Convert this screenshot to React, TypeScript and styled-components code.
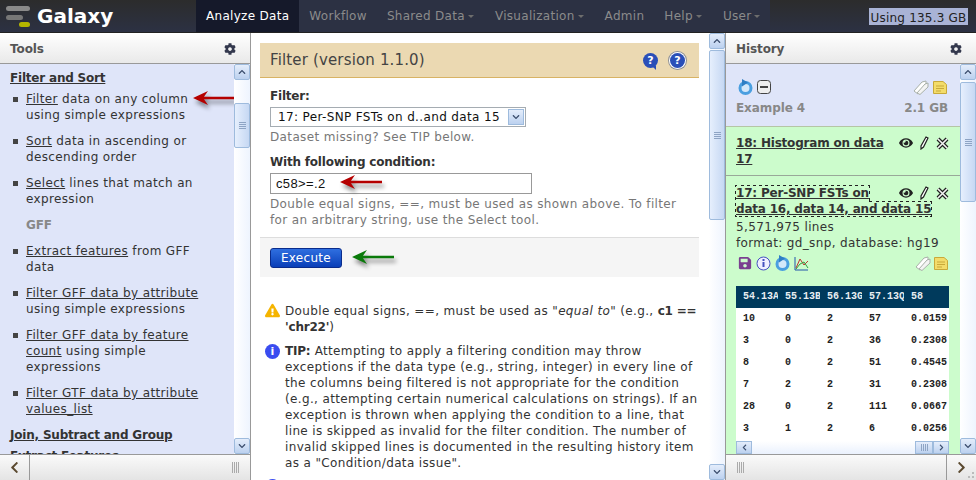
// App.tsx
import React from "react";
import styled, { createGlobalStyle } from "styled-components";
import { FaCog, FaEye, FaChevronLeft, FaChevronRight, FaChevronUp, FaChevronDown, FaSave, FaExclamationTriangle } from "react-icons/fa";

const GlobalStyle = createGlobalStyle`
  html, body { margin: 0; padding: 0; height: 100%; overflow: hidden; }
  body { font-family: "DejaVu Sans", Verdana, sans-serif; font-size: 12px; letter-spacing: 0.36px; color: #333; background: #fff; }
  b { letter-spacing: -0.2px; }
  #root { height: 480px; }
`;

const Page = styled.div`
  width: 976px;
  height: 480px;
  display: flex;
  flex-direction: column;
  overflow: hidden;
`;

const Masthead = styled.header`
  height: 33px;
  display: flex;
  background: linear-gradient(#2c2c2c, #2c3143);
  border-bottom: 1px solid #222;
  box-sizing: border-box;
  flex: none;
`;

const Brand = styled.div`
  width: 196px;
  display: flex;
  align-items: center;
  padding-left: 6px;
  gap: 7px;
  box-sizing: border-box;
`;

const BrandName = styled.span`
  color: #fff;
  font-weight: bold;
  font-size: 20px;
  letter-spacing: 0;
`;

const Nav = styled.nav`
  width: 574px;
  display: flex;
  background: #2c3143;
`;

const NavItem = styled.a<{ $active?: boolean }>`
  display: flex;
  align-items: center;
  padding: 0 10px;
  height: 32px;
  color: ${(p) => (p.$active ? "#fff" : "#8b8b8b")};
  background: ${(p) => (p.$active ? "#15192a" : "transparent")};
  font-size: 12px;
  letter-spacing: 0.3px;
  white-space: nowrap;
`;

const Caret = styled.i`
  display: inline-block;
  margin-left: 3px;
  margin-right: 1px;
  width: 0;
  height: 0;
  border-left: 3.5px solid transparent;
  border-right: 3.5px solid transparent;
  border-top: 3.5px solid #6d6d6d;
`;

const Quota = styled.div`
  margin-left: auto;
  margin-right: 8px;
  align-self: flex-start;
  margin-top: 8px;
  height: 17px;
  width: 99px;
  background: #a9b3d6;
  color: #222;
  font-size: 12px;
  letter-spacing: 0.2px;
  line-height: 20px;
  text-align: center;
  white-space: nowrap;
`;

const Main = styled.main`
  flex: 1;
  min-height: 0;
  display: flex;
`;

const SidePanel = styled.aside<{ $side: "left" | "right" }>`
  width: 251px;
  flex: none;
  display: flex;
  flex-direction: column;
  box-sizing: border-box;
  ${(p) => (p.$side === "left" ? "border-right: 1px solid #999;" : "border-left: 1px solid #999;")}
`;

const PanelHeader = styled.div`
  height: 31px;
  flex: none;
  box-sizing: border-box;
  display: flex;
  align-items: center;
  justify-content: space-between;
  padding: 2px 14px 0 10px;
  background: linear-gradient(#fff, #e9e9e9);
  border-bottom: 1px solid #999;
  font-weight: bold;
  font-size: 12px;
  letter-spacing: -0.1px;
  color: #555;
  svg { color: #33384d; width: 12px; height: 12px; }
`;

const PanelBody = styled.div`
  flex: 1;
  min-height: 0;
  display: flex;
  background: #dfe5f9;
`;

const PanelFooter = styled.div`
  height: 26px;
  flex: none;
  display: flex;
  align-items: stretch;
  box-sizing: border-box;
  background: linear-gradient(#fafafa, #e4e4e4);
  border-top: 1px solid #999;
`;

const FooterToggle = styled.div<{ $end?: boolean }>`
  width: 30px;
  display: flex;
  align-items: center;
  justify-content: center;
  box-sizing: border-box;
  color: #5b4a30;
  ${(p) => (p.$end ? "border-left: 1px solid #999;" : "border-right: 1px solid #999;")}
  ${(p) =>
    p.$end
      ? `background: radial-gradient(circle, #bbb 1px, transparent 1.2px) right 1px bottom 1px / 4px 4px no-repeat,
         radial-gradient(circle, #bbb 1px, transparent 1.2px) right 5px bottom 1px / 4px 4px no-repeat,
         radial-gradient(circle, #bbb 1px, transparent 1.2px) right 1px bottom 5px / 4px 4px no-repeat;`
      : ""}
  svg { width: 11px; height: 13px; }
`;

const Grip = styled.div`
  width: 7px;
  height: 11px;
  margin: 7px 0 0 0;
  background: repeating-linear-gradient(90deg, #aaa 0 1px, transparent 1px 2px);
`;

const FooterFill = styled.div<{ $end?: boolean }>`
  flex: 1;
  display: flex;
  justify-content: ${(p) => (p.$end ? "flex-end" : "flex-start")};
  padding: 0 ${(p) => (p.$end ? "11px" : "0")} 0 ${(p) => (p.$end ? "0" : "11px")};
`;

/* luna style scrollbars */
const ScrollV = styled.div`
  width: 16px;
  flex: none;
  display: flex;
  flex-direction: column;
  background: linear-gradient(90deg, #fff, #eef4fe);
  box-sizing: border-box;
`;

const ScrollBtn = styled.div`
  flex: none;
  width: 16px;
  height: 16px;
  box-sizing: border-box;
  border: 1px solid #9ebbdd;
  border-radius: 2px;
  background: linear-gradient(#e4edfb, #bcd1ef);
  display: flex;
  align-items: center;
  justify-content: center;
  color: #3c4e6e;
  svg { width: 8px; height: 8px; }
`;

const ScrollThumb = styled.div<{ $top: number; $h: number }>`
  margin-top: ${(p) => p.$top}px;
  height: ${(p) => p.$h}px;
  box-sizing: border-box;
  border: 1px solid #9ebbdd;
  border-radius: 2px;
  background: linear-gradient(90deg, #e6effd, #c6d8f3);
  display: flex;
  align-items: center;
  justify-content: center;
  flex: none;
`;

const ThumbLines = styled.div<{ $across?: boolean }>`
  width: 7px;
  height: 7px;
  background: repeating-linear-gradient(${(p) => (p.$across ? "90deg, " : "")}#8ea4c4 0 1px, transparent 1px 2px);
`;

const ScrollSpacer = styled.div`
  flex: 1;
`;

const ScrollContent = styled.div`
  flex: 1;
  min-width: 0;
  overflow: hidden;
  position: relative;
`;

/* tools */
const ToolsInner = styled.div`
  padding: 6px 0 0 10px;
  line-height: 16px;
  font-size: 12px;
  color: #333;
`;

const SectionTitle = styled.div<{ $gap?: number }>`
  font-weight: bold;
  letter-spacing: -0.2px;
  text-decoration: underline;
  margin: ${(p) => p.$gap ?? 0}px 0 5px;
  white-space: nowrap;
`;

const ToolList = styled.ul`
  list-style: none;
  margin: 0;
  padding: 0;
`;

const ToolItem = styled.li`
  padding-left: 16px;
  margin-bottom: 10px;
  position: relative;
  width: 184px;
  &::before {
    content: "";
    position: absolute;
    left: 3px;
    top: 6px;
    width: 5px;
    height: 5px;
    background: #444;
  }
`;

const ToolLabel = styled.div`
  padding-left: 16px;
  font-weight: bold;
  letter-spacing: -0.2px;
  color: #888;
  margin-bottom: 10px;
`;

const Link = styled.span`
  text-decoration: underline;
`;

/* center */
const Center = styled.section`
  flex: 1;
  min-width: 0;
  display: flex;
`;

const CenterInner = styled.div`
  padding: 10px 10px 0 9px;
`;

const FormCard = styled.div`
  position: relative;
`;

const FormTitle = styled.div`
  height: 35px;
  box-sizing: border-box;
  background: #ebd9b2;
  border-bottom: 1px solid #d8b365;
  display: flex;
  align-items: center;
  justify-content: space-between;
  padding: 0 14px 0 10px;
  font-size: 15px;
  letter-spacing: 0.15px;
  color: #444;
`;

const HelpIcons = styled.div`
  display: flex;
  gap: 12px;
`;

const FormBody = styled.div`
  padding: 10px 10px 0;
`;

const Field = styled.div`
  margin-bottom: 9px;
`;

const FieldLabel = styled.label`
  display: block;
  font-weight: bold;
  letter-spacing: -0.2px;
  line-height: 16px;
  margin-bottom: 3px;
`;

const SelectBox = styled.div`
  width: 256px;
  height: 20px;
  box-sizing: border-box;
  border: 1px solid #a5acb2;
  display: flex;
  align-items: center;
  justify-content: space-between;
  padding: 0 1px 0 7px;
  font-size: 12px;
  color: #111;
  white-space: nowrap;
`;

const SelectArrow = styled.div`
  width: 16px;
  height: 16px;
  box-sizing: border-box;
  border: 1px solid #9ebbdd;
  background: linear-gradient(#e4edfb, #bcd1ef);
  display: flex;
  align-items: center;
  justify-content: center;
  color: #3c4e6e;
  svg { width: 8px; height: 8px; }
`;

const TextInput = styled.div`
  width: 262px;
  height: 21px;
  box-sizing: border-box;
  border: 1px solid #999;
  padding: 0 5px;
  font-family: "Liberation Sans", Arial, sans-serif;
  font-size: 13px;
  line-height: 20px;
  color: #111;
`;

const Help = styled.div`
  color: #777;
  line-height: 16px;
  margin-top: 2px;
  white-space: nowrap;
`;

const ActionBar = styled.div`
  margin-top: 9px;
  height: 40px;
  background: #f5f5f5;
  border-top: 1px solid #ddd;
  box-sizing: border-box;
  padding: 10px 10px 0;
`;

const ExecuteButton = styled.button`
  width: 72px;
  height: 20px;
  border: 1px solid #0a2c8c;
  border-radius: 3px;
  background: linear-gradient(#2f6fe0, #0a3fb8);
  color: #fff;
  font-family: inherit;
  font-size: 12px;
  letter-spacing: 0.3px;
  padding: 0;
`;

const Notes = styled.div`
  margin-top: 26px;
`;

const Note = styled.div`
  display: flex;
  gap: 4px;
  padding-left: 5px;
  margin-bottom: 8px;
  line-height: 16px;
  color: #333;
  white-space: nowrap;
`;

const NoteIconSlot = styled.div`
  width: 16px;
  flex: none;
`;

const ArrowMark = styled.svg<{ $x: number; $y: number }>`
  position: absolute;
  left: ${(p) => p.$x}px;
  top: ${(p) => p.$y}px;
  overflow: visible;
  filter: drop-shadow(2px 4px 2px rgba(0, 0, 0, 0.45));
`;

/* history */
const HistoryScroll = styled.div`
  flex: 1;
  min-width: 0;
  display: flex;
  flex-direction: column;
  overflow: hidden;
`;

const Summary = styled.div`
  height: 63px;
  flex: none;
  box-sizing: border-box;
  padding: 15px 12px 0 10px;
  border-bottom: 1px solid #b5c5a5;
`;

const SummaryRow = styled.div`
  display: flex;
  justify-content: space-between;
  align-items: center;
  height: 16px;
`;

const IconRow = styled.div<{ $gap?: number }>`
  display: flex;
  align-items: center;
  gap: ${(p) => p.$gap ?? 4}px;
  padding: 0 1px 0 2px;
`;

const SummaryName = styled.div`
  display: flex;
  justify-content: space-between;
  font-weight: bold;
  letter-spacing: -0.1px;
  color: #888;
  margin-top: 6px;
`;

const Dataset = styled.div`
  flex: none;
  background: #ccfccc;
  padding: 8px 11px 8px 10px;
  font-size: 12px;
  line-height: 16px;
  color: #333;
  & + & {
    border-top: 1px solid #99a899;
    padding-top: 9px;
  }
`;

const DatasetHead = styled.div`
  &::after { content: ""; display: block; clear: both; }
`;

const DatasetTitle = styled.div<{ $focused?: boolean }>`
  font-weight: bold;
  letter-spacing: -0.2px;
  text-decoration: underline;
  span { ${(p) => (p.$focused ? "outline: 1px dotted #222;" : "")} }
`;

const DatasetActions = styled.div`
  float: right;
  display: flex;
  gap: 7px;
  align-items: center;
  color: #222;
  height: 16px;
  margin: 0 0 0 10px;
`;

const DatasetMeta = styled.div`
  margin-top: 2px;
`;

const DatasetIcons = styled.div`
  display: flex;
  justify-content: space-between;
  align-items: center;
  margin: 3px 0 0 0;
  height: 18px;
`;

const Peek = styled.div`
  margin-top: 14px;
  height: 155px;
  background: #fff;
  overflow: hidden;
  display: grid;
  grid-template-columns: repeat(5, 42px);
  grid-auto-rows: 22px;
  padding-left: 7px;
  font-family: "Liberation Mono", "DejaVu Sans Mono", monospace;
  font-size: 10px;
  letter-spacing: 0;
  font-weight: bold;
  color: #222;
`;

const PeekHead = styled.div`
  background: #003a5c;
  color: #e8eef2;
  line-height: 22px;
  margin-left: -7px;
  padding-left: 7px;
  white-space: nowrap;
  &:nth-child(5) { margin-right: -20px; }
`;

const PeekCell = styled.div`
  line-height: 22px;
  white-space: nowrap;
`;

const HScroll = styled.div`
  height: 13px;
  display: flex;
  background: linear-gradient(#fff, #eaf1fd);
`;

const HBtn = styled.div<{ $w?: number }>`
  width: ${(p) => p.$w ?? 16}px;
  height: 13px;
  box-sizing: border-box;
  border: 1px solid #9ebbdd;
  background: linear-gradient(#e4edfb, #bcd1ef);
  display: flex;
  align-items: center;
  justify-content: center;
  color: #3c4e6e;
  svg { width: 7px; height: 7px; }
`;

const HSpacer = styled.div`
  flex: 1;
`;

const RoundBadge = styled.span<{ $bg: string; $framed?: boolean; $tail?: boolean }>`
  width: 15px;
  height: 15px;
  border-radius: 50%;
  background: ${(p) => p.$bg};
  color: #fff;
  font-weight: bold;
  font-size: 11px;
  letter-spacing: 0;
  line-height: 15px;
  text-align: center;
  display: inline-block;
  flex: none;
  position: relative;
  ${(p) => (p.$framed ? "box-shadow: 0 0 0 1px #fff, 0 0 0 2px #8c8f96;" : "")}
  ${(p) =>
    p.$tail
      ? `&::after {
          content: "";
          position: absolute;
          right: 2px;
          bottom: -2px;
          border-left: 4px solid transparent;
          border-top: 4px solid ${p.$bg};
        }`
      : ""}
`;

const Arrow = ({ x, y, color }: { x: number; y: number; color: string }) => (
  <ArrowMark $x={x} $y={y} width="42" height="14" viewBox="0 0 42 14">
    <path d="M0 7 L15 0 L11 5.7 L42 5.7 L42 8.3 L11 8.3 L15 14Z" fill={color} />
  </ArrowMark>
);

const RerunIcon = () => (
  <svg width="15" height="16" viewBox="0 0 15 16">
    <circle cx="7.5" cy="9" r="5.5" fill="#d4e8fa" stroke="#4a9fe0" strokeWidth="3" />
    <path d="M4 0l6 3.5L4 7.5z" fill="#2f7fc4" />
  </svg>
);

const InfoIcon = () => (
  <svg width="15" height="15" viewBox="0 0 15 15">
    <circle cx="7.5" cy="7.5" r="6.5" fill="#eef" stroke="#4450c0" />
    <rect x="6.5" y="6" width="2" height="5" fill="#4450c0" />
    <rect x="6.5" y="3" width="2" height="2" fill="#4450c0" />
  </svg>
);

const ChartIcon = () => (
  <svg width="15" height="15" viewBox="0 0 15 15" fill="none">
    <path d="M1 1v13h13" stroke="#2255aa" />
    <path d="M2 12 L6 3 L10 9 L14 5" stroke="#c03030" />
    <path d="M2 13 L6 8 L10 6 L14 12" stroke="#30a040" />
  </svg>
);

const Tags = () => (
  <svg width="16" height="15" viewBox="0 0 16 15">
    <path d="M1 11 L9 2 L13 1 L13 5 L5 14Z" fill="#fff" stroke="#a8b0a8" />
    <path d="M4 13 L12 4 L15 3 L15 7 L7 14.5Z" fill="#f4f4f4" stroke="#a8b0a8" />
  </svg>
);

const NoteIcon = () => (
  <svg width="14" height="13" viewBox="0 0 14 13">
    <path d="M0.5 0.5H10L13.5 3.5V12.5H0.5Z" fill="#f3dc6a" stroke="#c8a93a" />
    <path d="M3 5H11M3 7.5H11M3 10H8" stroke="#c8a93a" />
  </svg>
);

const PencilIcon = () => (
  <svg width="9" height="14" viewBox="0 0 9 14">
    <path d="M6 1 L8 2 L3.5 11 L1 13 L1 10Z" fill="#fff" stroke="#222" strokeWidth="1.2" />
  </svg>
);

const CloseIcon = () => (
  <svg width="13" height="13" viewBox="0 0 13 13">
    <path d="M2 2L11 11M11 2L2 11" stroke="#222" strokeWidth="4" />
    <path d="M2 2L11 11M11 2L2 11" stroke="#f4f4f4" strokeWidth="1.6" />
  </svg>
);

const ItemActions = () => (
  <DatasetActions>
    <FaEye size={14} />
    <PencilIcon />
    <CloseIcon />
  </DatasetActions>
);

const peekHead = ["54.13A", "55.13B", "56.13G", "57.13Q", "58"];
const peekRows = [
  ["10", "0", "2", "57", "0.0159"],
  ["3", "0", "2", "36", "0.2308"],
  ["8", "0", "2", "51", "0.4545"],
  ["7", "2", "2", "31", "0.2308"],
  ["28", "0", "2", "111", "0.0667"],
  ["3", "1", "2", "6", "0.0256"],
];

export default function App() {
  return (
    <Page>
      <GlobalStyle />
      <Masthead>
        <Brand>
          <svg width="24" height="24" viewBox="0 0 24 24">
            <rect x="0" y="2" width="24" height="5" rx="2.5" fill="#8a8a8a" />
            <rect x="0" y="11" width="17" height="5" rx="2.5" fill="#777" />
            <rect x="13" y="18" width="11" height="5" rx="2.5" fill="#b5b500" />
          </svg>
          <BrandName>Galaxy</BrandName>
        </Brand>
        <Nav>
          <NavItem $active>Analyze Data</NavItem>
          <NavItem>Workflow</NavItem>
          <NavItem>Shared Data<Caret /></NavItem>
          <NavItem>Visualization<Caret /></NavItem>
          <NavItem>Admin</NavItem>
          <NavItem>Help<Caret /></NavItem>
          <NavItem>User<Caret /></NavItem>
        </Nav>
        <Quota>Using 135.3 GB</Quota>
      </Masthead>
      <Main>
        <SidePanel $side="left">
          <PanelHeader>Tools<FaCog /></PanelHeader>
          <PanelBody>
            <ScrollContent>
              <ToolsInner>
                <SectionTitle>Filter and Sort</SectionTitle>
                <ToolList>
                  <ToolItem><Link>Filter</Link> data on any column using simple expressions</ToolItem>
                  <ToolItem><Link>Sort</Link> data in ascending or descending order</ToolItem>
                  <ToolItem><Link>Select</Link> lines that match an expression</ToolItem>
                  <ToolLabel>GFF</ToolLabel>
                  <ToolItem><Link>Extract features</Link> from GFF data</ToolItem>
                  <ToolItem><Link>Filter GFF data by attribute</Link> using simple expressions</ToolItem>
                  <ToolItem><Link>Filter GFF data by feature count</Link> using simple expressions</ToolItem>
                  <ToolItem><Link>Filter GTF data by attribute values_list</Link></ToolItem>
                </ToolList>
                <SectionTitle>Join, Subtract and Group</SectionTitle>
                <SectionTitle $gap={5}>Extract Features</SectionTitle>
              </ToolsInner>
              <Arrow x={193} y={27} color="#b50000" />
            </ScrollContent>
            <ScrollV>
              <ScrollBtn><FaChevronUp /></ScrollBtn>
              <ScrollThumb $top={23} $h={45}><ThumbLines /></ScrollThumb>
              <ScrollSpacer />
              <ScrollBtn><FaChevronDown /></ScrollBtn>
            </ScrollV>
          </PanelBody>
          <PanelFooter>
            <FooterToggle><FaChevronLeft /></FooterToggle>
            <FooterFill $end><Grip /></FooterFill>
          </PanelFooter>
        </SidePanel>
        <Center>
          <ScrollContent>
            <CenterInner>
              <FormCard>
                <FormTitle>
                  Filter (version 1.1.0)
                  <HelpIcons>
                    <RoundBadge $bg="#2a4fb8" $tail>?</RoundBadge>
                    <RoundBadge $bg="#2a4fb8" $framed>?</RoundBadge>
                  </HelpIcons>
                </FormTitle>
                <FormBody>
                  <Field>
                    <FieldLabel>Filter:</FieldLabel>
                    <SelectBox>
                      17: Per-SNP FSTs on d..and data 15
                      <SelectArrow><FaChevronDown /></SelectArrow>
                    </SelectBox>
                    <Help>Dataset missing? See TIP below.</Help>
                  </Field>
                  <Field>
                    <FieldLabel>With following condition:</FieldLabel>
                    <TextInput>c58&gt;=.2</TextInput>
                    <Help>
                      Double equal signs, ==, must be used as shown above. To filter
                      <br />
                      for an arbitrary string, use the Select tool.
                    </Help>
                  </Field>
                </FormBody>
                <ActionBar>
                  <ExecuteButton>Execute</ExecuteButton>
                </ActionBar>
                <Arrow x={80} y={132} color="#b50000" />
                <Arrow x={92} y={207} color="#0a7a0a" />
              </FormCard>
              <Notes>
                <Note>
                  <NoteIconSlot><FaExclamationTriangle size={15} color="#f5b400" /></NoteIconSlot>
                  <div>
                    Double equal signs, ==, must be used as <em>"equal to"</em> (e.g., <b>c1 ==</b>
                    <br />
                    <b>'chr22'</b>)
                  </div>
                </Note>
                <Note>
                  <NoteIconSlot><RoundBadge $bg="#3a4cf0">i</RoundBadge></NoteIconSlot>
                  <div>
                    <b>TIP:</b> Attempting to apply a filtering condition may throw
                    <br />
                    exceptions if the data type (e.g., string, integer) in every line of
                    <br />
                    the columns being filtered is not appropriate for the condition
                    <br />
                    (e.g., attempting certain numerical calculations on strings). If an
                    <br />
                    exception is thrown when applying the condition to a line, that
                    <br />
                    line is skipped as invalid for the filter condition. The number of
                    <br />
                    invalid skipped lines is documented in the resulting history item
                    <br />
                    as a "Condition/data issue".
                  </div>
                </Note>
                <Note>
                  <NoteIconSlot><RoundBadge $bg="#3a4cf0" /></NoteIconSlot>
                </Note>
              </Notes>
            </CenterInner>
          </ScrollContent>
          <ScrollV>
            <ScrollBtn><FaChevronUp /></ScrollBtn>
            <ScrollThumb $top={1} $h={170}><ThumbLines /></ScrollThumb>
            <ScrollSpacer />
            <ScrollBtn><FaChevronDown /></ScrollBtn>
          </ScrollV>
        </Center>
        <SidePanel $side="right">
          <PanelHeader>History<FaCog /></PanelHeader>
          <PanelBody>
            <HistoryScroll>
              <Summary>
                <SummaryRow>
                  <IconRow>
                    <RerunIcon />
                    <svg width="14" height="14" viewBox="0 0 14 14">
                      <rect x="0.5" y="0.5" width="13" height="13" rx="3" fill="#eee" stroke="#444" />
                      <rect x="3" y="6" width="8" height="2" fill="#444" />
                    </svg>
                  </IconRow>
                  <IconRow><Tags /><NoteIcon /></IconRow>
                </SummaryRow>
                <SummaryName>
                  <span>Example 4</span>
                  <span>2.1 GB</span>
                </SummaryName>
              </Summary>
              <Dataset>
                <DatasetHead>
                  <ItemActions />
                  <DatasetTitle>18: Histogram on data 17</DatasetTitle>
                </DatasetHead>
              </Dataset>
              <Dataset>
                <DatasetHead>
                  <ItemActions />
                  <DatasetTitle $focused><span>17: Per-SNP FSTs on data 16, data 14, and data 15</span></DatasetTitle>
                </DatasetHead>
                <DatasetMeta>
                  5,571,975 lines
                  <br />
                  format: gd_snp, database: hg19
                </DatasetMeta>
                <DatasetIcons>
                  <IconRow $gap={4}>
                    <FaSave color="#7a3f90" size={14} />
                    <InfoIcon />
                    <RerunIcon />
                    <ChartIcon />
                  </IconRow>
                  <IconRow $gap={3}><Tags /><NoteIcon /></IconRow>
                </DatasetIcons>
                <Peek>
                  {peekHead.map((h) => (
                    <PeekHead key={h}>{h}</PeekHead>
                  ))}
                  {peekRows.map((row, i) =>
                    row.map((c, j) => <PeekCell key={`${i}-${j}`}>{c}</PeekCell>)
                  )}
                </Peek>
                <HScroll>
                  <HBtn><FaChevronLeft /></HBtn>
                  <HSpacer />
                  <HBtn $w={18}><ThumbLines $across /></HBtn>
                  <HBtn><FaChevronRight /></HBtn>
                </HScroll>
              </Dataset>
            </HistoryScroll>
            <ScrollV>
              <ScrollBtn><FaChevronUp /></ScrollBtn>
              <ScrollThumb $top={2} $h={120}><ThumbLines /></ScrollThumb>
              <ScrollSpacer />
              <ScrollBtn><FaChevronDown /></ScrollBtn>
            </ScrollV>
          </PanelBody>
          <PanelFooter>
            <FooterFill><Grip /></FooterFill>
            <FooterToggle $end><FaChevronRight /></FooterToggle>
          </PanelFooter>
        </SidePanel>
      </Main>
    </Page>
  );
}
